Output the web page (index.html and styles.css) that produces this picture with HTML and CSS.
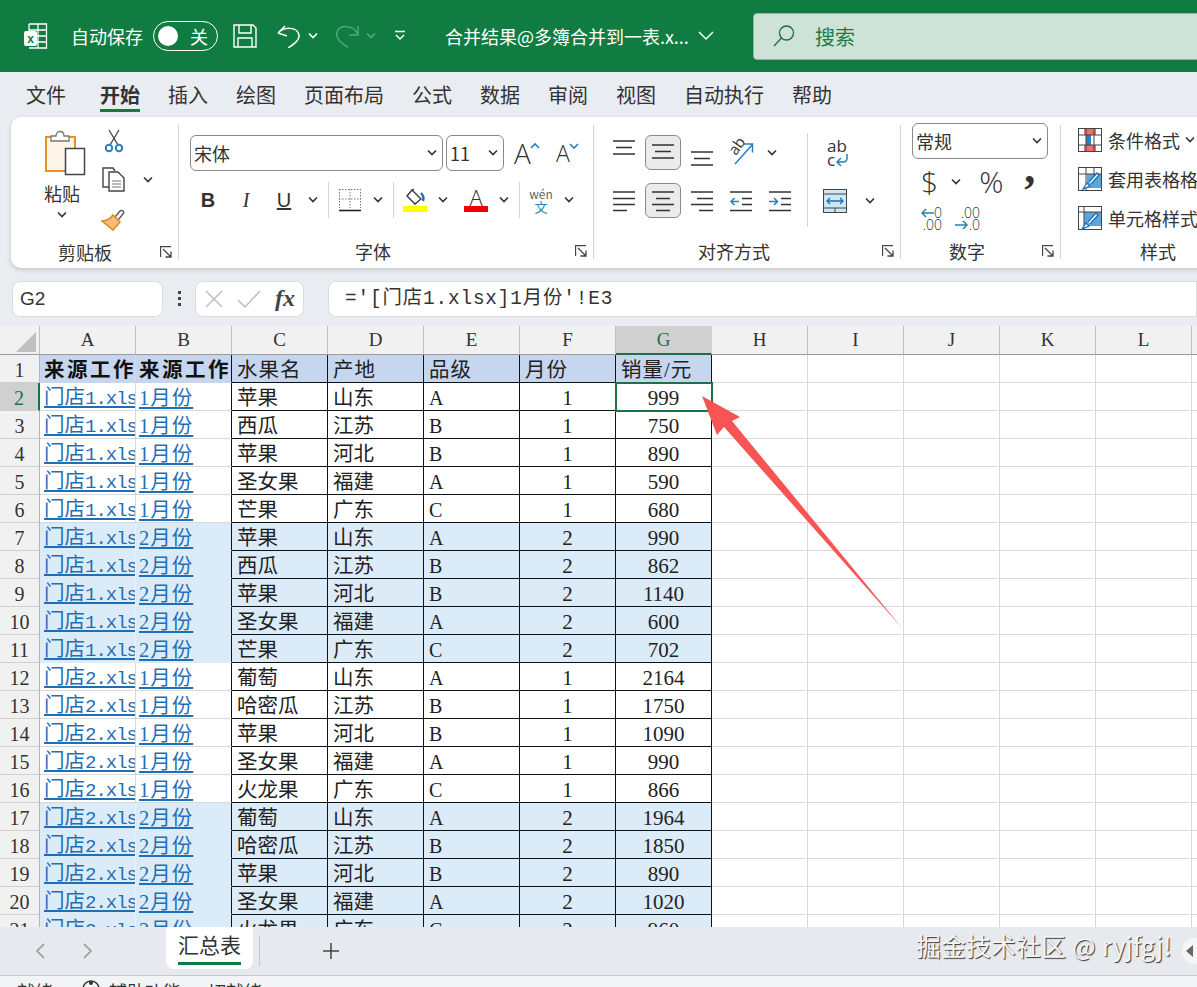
FILE: index.html
```html
<!DOCTYPE html>
<html lang="zh-CN">
<head>
    <meta charset="UTF-8">
    <meta name="viewport" content="width=device-width, initial-scale=1.0">
    <title>合并结果@多簿合并到一表.xlsx - Excel</title>
    <link rel="stylesheet" href="styles.css">
</head>
<body>
    <svg class="sprite" width="0" height="0">
        <symbol id="chev" viewBox="0 0 20 12"><path d="M6 3.500l4 4 4-4" fill="none" stroke="currentColor" stroke-width="1.600"/></symbol>
        <symbol id="launcher" viewBox="0 0 12 12"><path d="M.5 11V.5H11M3 3l8 8M11 5.500V11H5.500" fill="none" stroke="#444" stroke-width="1.300"/></symbol>
    </svg>

    <!-- 标题栏 -->
    <header class="titlebar">
        <svg class="ic-logo" width="24" height="26" viewBox="0 0 24 26">
            <path d="M5 1h17.500v24H5M5 1v7M14 1v24M5 7h17.500M5 13h17.500M5 19h17.500" fill="none" stroke="#fff" stroke-width="1.300"/>
            <rect x="0" y="8" width="13" height="15" rx="2" fill="#fff"/>
            <text x="6.500" y="20" class="logo-x">x</text>
        </svg>
        <span class="autosave">自动保存</span>
        <div class="toggle"><i class="knob"></i><span>关</span></div>
        <svg class="ic-save" width="24" height="24" viewBox="0 0 24 24"><path d="M1 1h19l3 3v19H1zM6 1v8h12V1M5 23v-9h14v9" fill="none" stroke="#fff" stroke-width="1.400"/></svg>
        <svg class="ic-undo" width="24" height="24" viewBox="0 0 24 24"><path d="M1 9l7-7M1 9l9 3M1 9c6-6 19-7 21 2 1 5-5 9-11 13" fill="none" stroke="#fff" stroke-width="1.500"/></svg>
        <svg class="ic-small" width="20" height="12"><use href="#chev"/></svg>
        <svg class="ic-redo" width="24" height="24" viewBox="0 0 24 24"><path d="M23 2v9h-9M23 10C18 1 5 0 2 8c-2 6 5 12 11 15" fill="none" stroke="#4fa97b" stroke-width="1.500"/></svg>
        <svg class="ic-small dim" width="20" height="12"><use href="#chev"/></svg>
        <svg class="ic-qat" width="12" height="12" viewBox="0 0 12 12"><path d="M1 1.500h10M2 5l4 4 4-4" fill="none" stroke="#fff" stroke-width="1.500"/></svg>
        <span class="doc-name">合并结果@多簿合并到一表.x...</span>
        <svg class="ic-title" width="16" height="10" viewBox="0 0 16 10"><path d="M1 1l7 7 7-7" fill="none" stroke="#fff" stroke-width="1.500"/></svg>
        <div class="search">
            <svg width="22" height="22" viewBox="0 0 22 22"><circle cx="13.500" cy="8" r="7" fill="none" stroke="#1c6b44" stroke-width="1.300"/><path d="M8.500 13L1 21" stroke="#1c6b44" stroke-width="1.300"/></svg>
            <span>搜索</span>
        </div>
    </header>

    <!-- 选项卡 -->
    <nav class="tabs">
        <span>文件</span><span class="active">开始</span><span>插入</span><span>绘图</span><span>页面布局</span><span>公式</span><span>数据</span><span>审阅</span><span>视图</span><span>自动执行</span><span>帮助</span>
    </nav>

    <!-- 功能区 -->
    <section class="ribbon">
        <div class="group group-clip">
            <div class="body clip-body">
                <div class="paste">
                    <svg class="paste-ic" width="42" height="46" viewBox="0 0 42 46">
                        <rect x="2" y="7" width="29" height="34" fill="#fdf5e8" stroke="#e8912a" stroke-width="2"/>
                        <path d="M7 11V6h5c0-6 8-6 8 0h5v5z" fill="#fff" stroke="#777" stroke-width="1.300"/>
                        <rect x="21.500" y="18.500" width="19" height="26" fill="#fff" stroke="#444" stroke-width="1.500"/>
                    </svg>
                    <span>粘贴</span>
                    <svg width="20" height="12"><use href="#chev"/></svg>
                </div>
                <div class="clip-tools">
                    <div class="clip-row">
                        <svg width="26" height="24" viewBox="0 0 26 24"><path d="M8 1l9 15M18 1L9 16" fill="none" stroke="#444" stroke-width="1.300"/><circle cx="8" cy="19" r="3.200" fill="none" stroke="#2a80b9" stroke-width="2"/><circle cx="18" cy="19" r="3.200" fill="none" stroke="#2a80b9" stroke-width="2"/></svg>
                    </div>
                    <div class="clip-row">
                        <svg width="26" height="25" viewBox="0 0 26 25"><path d="M8 20H2V1h10l2 3" fill="none" stroke="#444" stroke-width="1.400"/><path d="M8 5h9l6 6v13H8z" fill="#fff" stroke="#444" stroke-width="1.400"/><path d="M11 14h9M11 17h9M11 20h9" stroke="#777"/></svg>
                        <svg class="clip-chev" width="20" height="12"><use href="#chev"/></svg>
                    </div>
                    <div class="clip-row">
                        <svg width="26" height="24" viewBox="0 0 26 24"><path d="M14 10l5-6c2-2 5 1 3 3l-5 6" fill="#fff" stroke="#555" stroke-width="1.300"/><path d="M12 8l7 7-7 8-11-9c4 0 8-2 11-6z" fill="#f3c07a" stroke="#e08a22" stroke-width="1.600"/></svg>
                    </div>
                </div>
            </div>
            <div class="label label-clip"><span>剪贴板</span><svg class="launch" width="12" height="12"><use href="#launcher"/></svg></div>
        </div>
        <i class="divider"></i>

        <div class="group group-font">
            <div class="body">
                <div class="font-row">
                    <div class="field field-font"><span>宋体</span><svg width="20" height="12"><use href="#chev"/></svg></div>
                    <div class="field field-size"><span>11</span><svg width="20" height="12"><use href="#chev"/></svg></div>
                    <div class="grow"><span class="big-a">A</span><svg width="10" height="8" viewBox="0 0 10 8"><path d="M1 6l4-4 4 4" fill="none" stroke="#2a80b9" stroke-width="1.600"/></svg></div>
                    <div class="grow shrink"><span class="small-a">A</span><svg width="10" height="8" viewBox="0 0 10 8"><path d="M1 2l4 4 4-4" fill="none" stroke="#2a80b9" stroke-width="1.600"/></svg></div>
                </div>
                <div class="font-row second">
                    <span class="fmt fmt-b">B</span><span class="fmt fmt-i">I</span><span class="fmt fmt-u">U</span>
                    <svg class="fmt-chev" width="20" height="12"><use href="#chev"/></svg>
                    <i class="vsep"></i>
                    <div class="split">
                        <svg width="24" height="24" viewBox="0 0 24 24"><path d="M1.500 1v19M12 1v19M22.500 1v19M1 1.500h22M1 11h22" fill="none" stroke="#777" stroke-dasharray="1.500 1.500"/><path d="M1 22.500h22" stroke="#222" stroke-width="1.600"/></svg>
                        <svg width="20" height="12"><use href="#chev"/></svg>
                    </div>
                    <i class="vsep"></i>
                    <div class="split">
                        <div class="swatch swatch-yellow"><svg width="24" height="17" viewBox="0 0 24 17"><path d="M9 2l9 9-6 5-8-8zM9 2l2-1" fill="#fff" stroke="#333" stroke-width="1.300"/><path d="M18 5c2 2 3 5 2 8" fill="none" stroke="#1f6fb5" stroke-width="2.400"/></svg></div>
                        <svg width="20" height="12"><use href="#chev"/></svg>
                    </div>
                    <div class="split next">
                        <div class="swatch swatch-red"><span>A</span></div>
                        <svg width="20" height="12"><use href="#chev"/></svg>
                    </div>
                    <i class="vsep"></i>
                    <div class="split">
                        <div class="wen"><span>wén</span><b>文</b></div>
                        <svg width="20" height="12"><use href="#chev"/></svg>
                    </div>
                </div>
            </div>
            <div class="label label-font"><span>字体</span><svg class="launch" width="12" height="12"><use href="#launcher"/></svg></div>
        </div>
        <i class="divider"></i>

        <div class="group group-align">
            <div class="body align-body">
                <div class="align-grid">
                    <div class="align-row">
                        <div class="cell"><svg width="22" height="35" viewBox="0 0 22 35"><path d="M0 6h22M3 12.500h16M0 19h22" stroke="#333" stroke-width="1.300"/></svg></div>
                        <div class="cell on"><svg width="22" height="35" viewBox="0 0 22 35"><path d="M0 10h22M3 16.500h16M0 23h22" stroke="#333" stroke-width="1.300"/></svg></div>
                        <div class="cell"><svg width="22" height="35" viewBox="0 0 22 35"><path d="M0 17h22M3 23.500h16M0 30h22" stroke="#333" stroke-width="1.300"/></svg></div>
                        <div class="cell"><svg width="26" height="28" viewBox="0 0 26 28"><text class="ab" transform="translate(8 17) rotate(-55)">ab</text><path d="M7 25L24 6M16 5h8.500v8.500" fill="none" stroke="#2a80b9" stroke-width="1.500"/></svg></div>
                        <svg class="orient-chev" width="20" height="12"><use href="#chev"/></svg>
                    </div>
                    <div class="align-row">
                        <div class="cell"><svg width="22" height="24" viewBox="0 0 22 24"><path d="M0 3h22M0 9.500h22M0 15.500h22M0 21.500h14" stroke="#333" stroke-width="1.300"/></svg></div>
                        <div class="cell on"><svg width="22" height="24" viewBox="0 0 22 24"><path d="M0 3h22M4 9.500h14M0 15.500h22M4 21.500h14" stroke="#333" stroke-width="1.300"/></svg></div>
                        <div class="cell"><svg width="22" height="24" viewBox="0 0 22 24"><path d="M0 3h22M6 9.500h16M0 15.500h22M8 21.500h14" stroke="#333" stroke-width="1.300"/></svg></div>
                        <div class="cell"><svg width="22" height="24" viewBox="0 0 22 24"><path d="M0 3h22M12 9.500h10M12 15.500h10M0 21.500h22" stroke="#333" stroke-width="1.300"/><path d="M9 12.500H1M4.500 9l-3.500 3.500L4.500 16" fill="none" stroke="#2a80b9" stroke-width="1.500"/></svg></div>
                        <div class="cell"><svg width="22" height="24" viewBox="0 0 22 24"><path d="M0 3h22M12 9.500h10M12 15.500h10M0 21.500h22" stroke="#333" stroke-width="1.300"/><path d="M0 12.500h8.500M5 9l3.500 3.500L5 16" fill="none" stroke="#2a80b9" stroke-width="1.500"/></svg></div>
                    </div>
                </div>
                <i class="vsep tall"></i>
                <div class="wrap-col">
                    <div class="wrap"><span>ab<br>c</span><svg width="14" height="14" viewBox="0 0 14 14"><path d="M12 1v4c0 3-2 4-4 4H2M6 5L2 9l4 4" fill="none" stroke="#2a80b9" stroke-width="1.500"/></svg></div>
                    <div class="merge">
                        <svg width="24" height="24" viewBox="0 0 24 24"><rect x=".5" y=".5" width="23" height="23" fill="#cfe6f5" stroke="#444"/><path d="M1 5h22M1 19h22" stroke="#444"/><path d="M12 19v4" stroke="#444"/><path d="M4 12h16M7 9l-3 3 3 3M17 9l3 3-3 3" fill="none" stroke="#1f6fb5" stroke-width="1.300"/></svg>
                        <svg width="20" height="12"><use href="#chev"/></svg>
                    </div>
                </div>
            </div>
            <div class="label label-align"><span>对齐方式</span><svg class="launch" width="12" height="12"><use href="#launcher"/></svg></div>
        </div>
        <i class="divider"></i>

        <div class="group group-num">
            <div class="body">
                <div class="field field-num"><span>常规</span><svg width="20" height="12"><use href="#chev"/></svg></div>
                <div class="num-row">
                    <span class="sym sym-dollar">$</span>
                    <svg class="num-chev" width="20" height="12"><use href="#chev"/></svg>
                    <span class="sym sym-pct">%</span>
                    <span class="sym sym-comma">,</span>
                </div>
                <div class="dec-row">
                    <div class="dec"><span class="dec-top"><svg width="14" height="10" viewBox="0 0 14 10"><path d="M14 5H2M6 1L2 5l4 4" fill="none" stroke="#2a80b9" stroke-width="1.500"/></svg>0</span><span>.00</span></div>
                    <div class="dec"><span>.00</span><span class="dec-top"><svg width="14" height="10" viewBox="0 0 14 10"><path d="M0 5h12M8 1l4 4-4 4" fill="none" stroke="#2a80b9" stroke-width="1.500"/></svg>.0</span></div>
                </div>
            </div>
            <div class="label label-num"><span>数字</span><svg class="launch" width="12" height="12"><use href="#launcher"/></svg></div>
        </div>
        <i class="divider"></i>

        <div class="group group-style">
            <div class="body">
                <div class="style-row">
                    <svg width="24" height="24" viewBox="0 0 24 24"><rect x=".5" y=".5" width="23" height="23" fill="#fff" stroke="#444"/><path d="M6 1h12v6H6zM6 17h12v6H6z" fill="#f26b6b"/><path d="M8 7h5v10H8z" fill="#2a80b9"/><path d="M1 7h22M1 17h22M8 1v22M16 1v22" stroke="#444"/></svg>
                    <span>条件格式</span><svg width="20" height="12"><use href="#chev"/></svg>
                </div>
                <div class="style-row">
                    <svg width="24" height="24" viewBox="0 0 24 24"><rect x=".5" y=".5" width="23" height="23" fill="#fff" stroke="#444"/><path d="M9 7h14v14H9z" fill="#5ea5da"/><path d="M1 7h22M8 1v22M16 1v10" stroke="#444"/><path d="M5 22l4-6 3 3zM11 15l8-9 2 2-8 9" fill="#fff" stroke="#1f6fb5" stroke-width="1.300"/></svg>
                    <span>套用表格格式</span>
                </div>
                <div class="style-row">
                    <svg width="24" height="24" viewBox="0 0 24 24"><rect x=".5" y=".5" width="23" height="23" fill="#fff" stroke="#444"/><path d="M6 6h17v14H6z" fill="#5ea5da"/><path d="M1 6h22M6 1v22" stroke="#444"/><path d="M4 23l4-6 3 3zM10 16l8-9 2 2-8 9" fill="#fff" stroke="#1f6fb5" stroke-width="1.300"/></svg>
                    <span>单元格样式</span>
                </div>
            </div>
            <div class="label label-style"><span>样式</span></div>
        </div>
    </section>

    <!-- 编辑栏 -->
    <div class="formula-bar">
        <div class="name-box">G2<i></i></div>
        <div class="dots"><i></i><i></i><i></i></div>
        <div class="fx-box">
            <svg width="20" height="20" viewBox="0 0 20 20"><path d="M2 2l16 16M18 2L2 18" stroke="#bdbdbd" stroke-width="1.500"/></svg>
            <svg width="24" height="20" viewBox="0 0 24 20"><path d="M1 11l7 7L23 2" fill="none" stroke="#bdbdbd" stroke-width="1.500"/></svg>
            <span class="fx">fx</span>
        </div>
        <div class="formula">='[门店1.xlsx]1月份'!E3</div>
    </div>

    <!-- 工作表 -->
    <main class="sheet">
        <table class="grid">
            <colgroup>
                <col class="col-row"><col><col><col><col><col><col><col><col><col><col><col><col><col>
            </colgroup>
            <thead>
                <tr>
                    <th class="corner"><i></i></th><th>A</th><th>B</th><th>C</th><th>D</th><th>E</th><th>F</th><th class="sel-col">G</th><th>H</th><th>I</th><th>J</th><th>K</th><th>L</th><th>M</th>
                </tr>
            </thead>
            <tbody>
                <tr class="head"><th>1</th><td class="src"><b>来源工作表</b></td><td class="src end"><b>来源工作表</b></td><td class="d">水果名</td><td class="d">产地</td><td class="d">品级</td><td class="d">月份</td><td class="d">销量/元</td><td></td><td></td><td></td><td></td><td></td><td></td></tr>
                <tr><th class="sel-row">2</th><td class="src"><a>门店<span>1.xlsx</span></a></td><td class="src end"><a>1月份</a></td><td class="d">苹果</td><td class="d">山东</td><td class="d n-l">A</td><td class="d n">1</td><td class="d n current">999</td><td></td><td></td><td></td><td></td><td></td><td></td></tr>
                <tr><th>3</th><td class="src"><a>门店<span>1.xlsx</span></a></td><td class="src end"><a>1月份</a></td><td class="d">西瓜</td><td class="d">江苏</td><td class="d n-l">B</td><td class="d n">1</td><td class="d n">750</td><td></td><td></td><td></td><td></td><td></td><td></td></tr>
                <tr><th>4</th><td class="src"><a>门店<span>1.xlsx</span></a></td><td class="src end"><a>1月份</a></td><td class="d">苹果</td><td class="d">河北</td><td class="d n-l">B</td><td class="d n">1</td><td class="d n">890</td><td></td><td></td><td></td><td></td><td></td><td></td></tr>
                <tr><th>5</th><td class="src"><a>门店<span>1.xlsx</span></a></td><td class="src end"><a>1月份</a></td><td class="d">圣女果</td><td class="d">福建</td><td class="d n-l">A</td><td class="d n">1</td><td class="d n">590</td><td></td><td></td><td></td><td></td><td></td><td></td></tr>
                <tr><th>6</th><td class="src"><a>门店<span>1.xlsx</span></a></td><td class="src end"><a>1月份</a></td><td class="d">芒果</td><td class="d">广东</td><td class="d n-l">C</td><td class="d n">1</td><td class="d n">680</td><td></td><td></td><td></td><td></td><td></td><td></td></tr>
                <tr class="alt"><th>7</th><td class="src"><a>门店<span>1.xlsx</span></a></td><td class="src end"><a>2月份</a></td><td class="d">苹果</td><td class="d">山东</td><td class="d n-l">A</td><td class="d n">2</td><td class="d n">990</td><td></td><td></td><td></td><td></td><td></td><td></td></tr>
                <tr class="alt"><th>8</th><td class="src"><a>门店<span>1.xlsx</span></a></td><td class="src end"><a>2月份</a></td><td class="d">西瓜</td><td class="d">江苏</td><td class="d n-l">B</td><td class="d n">2</td><td class="d n">862</td><td></td><td></td><td></td><td></td><td></td><td></td></tr>
                <tr class="alt"><th>9</th><td class="src"><a>门店<span>1.xlsx</span></a></td><td class="src end"><a>2月份</a></td><td class="d">苹果</td><td class="d">河北</td><td class="d n-l">B</td><td class="d n">2</td><td class="d n">1140</td><td></td><td></td><td></td><td></td><td></td><td></td></tr>
                <tr class="alt"><th>10</th><td class="src"><a>门店<span>1.xlsx</span></a></td><td class="src end"><a>2月份</a></td><td class="d">圣女果</td><td class="d">福建</td><td class="d n-l">A</td><td class="d n">2</td><td class="d n">600</td><td></td><td></td><td></td><td></td><td></td><td></td></tr>
                <tr class="alt"><th>11</th><td class="src"><a>门店<span>1.xlsx</span></a></td><td class="src end"><a>2月份</a></td><td class="d">芒果</td><td class="d">广东</td><td class="d n-l">C</td><td class="d n">2</td><td class="d n">702</td><td></td><td></td><td></td><td></td><td></td><td></td></tr>
                <tr><th>12</th><td class="src"><a>门店<span>2.xlsx</span></a></td><td class="src end"><a>1月份</a></td><td class="d">葡萄</td><td class="d">山东</td><td class="d n-l">A</td><td class="d n">1</td><td class="d n">2164</td><td></td><td></td><td></td><td></td><td></td><td></td></tr>
                <tr><th>13</th><td class="src"><a>门店<span>2.xlsx</span></a></td><td class="src end"><a>1月份</a></td><td class="d">哈密瓜</td><td class="d">江苏</td><td class="d n-l">B</td><td class="d n">1</td><td class="d n">1750</td><td></td><td></td><td></td><td></td><td></td><td></td></tr>
                <tr><th>14</th><td class="src"><a>门店<span>2.xlsx</span></a></td><td class="src end"><a>1月份</a></td><td class="d">苹果</td><td class="d">河北</td><td class="d n-l">B</td><td class="d n">1</td><td class="d n">1090</td><td></td><td></td><td></td><td></td><td></td><td></td></tr>
                <tr><th>15</th><td class="src"><a>门店<span>2.xlsx</span></a></td><td class="src end"><a>1月份</a></td><td class="d">圣女果</td><td class="d">福建</td><td class="d n-l">A</td><td class="d n">1</td><td class="d n">990</td><td></td><td></td><td></td><td></td><td></td><td></td></tr>
                <tr><th>16</th><td class="src"><a>门店<span>2.xlsx</span></a></td><td class="src end"><a>1月份</a></td><td class="d">火龙果</td><td class="d">广东</td><td class="d n-l">C</td><td class="d n">1</td><td class="d n">866</td><td></td><td></td><td></td><td></td><td></td><td></td></tr>
                <tr class="alt"><th>17</th><td class="src"><a>门店<span>2.xlsx</span></a></td><td class="src end"><a>2月份</a></td><td class="d">葡萄</td><td class="d">山东</td><td class="d n-l">A</td><td class="d n">2</td><td class="d n">1964</td><td></td><td></td><td></td><td></td><td></td><td></td></tr>
                <tr class="alt"><th>18</th><td class="src"><a>门店<span>2.xlsx</span></a></td><td class="src end"><a>2月份</a></td><td class="d">哈密瓜</td><td class="d">江苏</td><td class="d n-l">B</td><td class="d n">2</td><td class="d n">1850</td><td></td><td></td><td></td><td></td><td></td><td></td></tr>
                <tr class="alt"><th>19</th><td class="src"><a>门店<span>2.xlsx</span></a></td><td class="src end"><a>2月份</a></td><td class="d">苹果</td><td class="d">河北</td><td class="d n-l">B</td><td class="d n">2</td><td class="d n">890</td><td></td><td></td><td></td><td></td><td></td><td></td></tr>
                <tr class="alt"><th>20</th><td class="src"><a>门店<span>2.xlsx</span></a></td><td class="src end"><a>2月份</a></td><td class="d">圣女果</td><td class="d">福建</td><td class="d n-l">A</td><td class="d n">2</td><td class="d n">1020</td><td></td><td></td><td></td><td></td><td></td><td></td></tr>
                <tr class="alt"><th>21</th><td class="src"><a>门店<span>2.xlsx</span></a></td><td class="src end"><a>2月份</a></td><td class="d">火龙果</td><td class="d">广东</td><td class="d n-l">C</td><td class="d n">2</td><td class="d n">960</td><td></td><td></td><td></td><td></td><td></td><td></td></tr>
            </tbody>
        </table>
        <!-- 红色箭头标注 -->
        <svg class="arrow" width="210" height="245" viewBox="0 0 210 245"><path d="M2 6L40 27 32 31 202 238 24 37 17 45z" fill="#f85454"/></svg>
    </main>

    <!-- 工作表标签 -->
    <div class="sheet-tabs">
        <svg class="nav-prev" width="12" height="18" viewBox="0 0 12 18"><path d="M10 2L3 9l7 7" fill="none" stroke="#a3a3a3" stroke-width="1.800"/></svg>
        <svg class="nav-next" width="12" height="18" viewBox="0 0 12 18"><path d="M2 2l7 7-7 7" fill="none" stroke="#a3a3a3" stroke-width="1.800"/></svg>
        <div class="sheet-tab"><span>汇总表</span></div>
        <i class="tab-sep"></i>
        <svg class="add-sheet" width="18" height="18" viewBox="0 0 18 18"><path d="M9 1v16M1 9h16" stroke="#444" stroke-width="1.500"/></svg>
        <span class="watermark">掘金技术社区 @ ryjfgj!</span>
        <div class="scroll-pill"><i></i></div>
    </div>

    <!-- 状态栏 -->
    <footer class="statusbar">
        <span>就绪</span>
        <svg class="status-ic" width="20" height="20" viewBox="0 0 20 20"><circle cx="10" cy="10" r="8" fill="none" stroke="#333" stroke-width="1.500"/><circle cx="10" cy="4" r="2" fill="#333"/></svg>
        <span>辅助功能: 一切就绪</span>
    </footer>
</body>
</html>
```

FILE: styles.css
```css
* {
    box-sizing: border-box;
}
body {
    margin: 0;
    width: 1197px;
    height: 987px;
    overflow: hidden;
    background-color: #e9ecf0;
    color: #333;
    font-family: "Noto Sans CJK SC", "Noto Sans", sans-serif;
}
i {
    font-style: normal;
}
svg {
    display: block;
    flex: none;
}
.sprite {
    position: absolute;
}

/* 标题栏 */
.titlebar {
    display: flex;
    align-items: center;
    height: 72px;
    padding-left: 24px;
    overflow: hidden;
    background-color: #107c41;
    color: #fff;
    font-size: 18px;
    white-space: nowrap;
}
.logo-x {
    font: bold 12px "Liberation Sans", sans-serif;
    fill: #107c41;
    text-anchor: middle;
}
.autosave {
    flex: none;
    margin-left: 23px;
}
.toggle {
    display: flex;
    flex: none;
    align-items: center;
    width: 65px;
    height: 30px;
    margin-left: 10px;
    padding-left: 4px;
    border: 1px solid #fff;
    border-radius: 15px;
}
.knob {
    width: 20px;
    height: 20px;
    border-radius: 50%;
    background-color: #fff;
}
.toggle span {
    margin-left: 12px;
}
.ic-save {
    margin-left: 15px;
}
.ic-undo {
    margin-left: 20px;
}
.ic-small {
    margin-left: 2px;
}
.ic-small.dim {
    color: #4fa97b;
}
.ic-redo {
    margin-left: 12px;
}
.ic-qat {
    margin-left: 13px;
}
.doc-name {
    flex: none;
    width: 244px;
    margin-left: 39px;
}
.ic-title {
    margin-left: 9px;
}
.search {
    display: flex;
    flex: none;
    align-items: center;
    width: 600px;
    height: 47px;
    margin-left: 39px;
    padding-left: 19px;
    border: 1px solid #8fb5a0;
    border-radius: 4px;
    background-color: #cde3d8;
    color: #1c7a4a;
    font-size: 20px;
}
.search span {
    margin-left: 20px;
}

/* 选项卡 */
.tabs {
    display: flex;
    gap: 28px;
    height: 45px;
    padding: 9px 0 0 26px;
    font-size: 20px;
    line-height: 28px;
}
.tabs span {
    height: 31px;
    white-space: nowrap;
}
.tabs span:first-child {
    margin-right: 6px;
}
.tabs .active {
    border-bottom: 3px solid #107c41;
    font-weight: 700;
}

/* 功能区 */
.ribbon {
    display: flex;
    width: 1260px;
    height: 151px;
    margin-left: 11px;
    border-radius: 10px;
    background-color: #fff;
    box-shadow: 0 2px 4px rgba(0, 0, 0, 0.16);
    font-size: 18px;
}
.group {
    display: flex;
    flex-direction: column;
    flex: none;
}
.group .body {
    flex: 1;
}
.divider {
    flex: none;
    width: 1px;
    margin: 8px 0 9px;
    background-color: #d4d4d4;
}
.label {
    display: flex;
    align-items: center;
    height: 28px;
    margin-bottom: 3px;
    color: #333;
    line-height: 28px;
    white-space: nowrap;
}
.launch {
    margin-left: auto;
    margin-right: 6px;
}
.group-clip {
    width: 167px;
}
.group-font {
    width: 414px;
}
.group-align {
    width: 306px;
}
.group-num {
    width: 159px;
}
.group-style {
    width: 300px;
}
.label-clip {
    padding-left: 47px;
}
.label-font {
    padding-left: 176px;
}
.label-align {
    padding-left: 104px;
}
.label-num {
    padding-left: 48px;
}
.label-style {
    padding-left: 79px;
}

/* 剪贴板 */
.clip-body {
    display: flex;
}
.paste {
    display: flex;
    flex-direction: column;
    align-items: center;
    width: 38px;
    margin-left: 32px;
    padding-top: 13px;
}
.paste-ic {
    margin-left: 5px;
}
.paste span {
    margin-top: 3px;
    line-height: 28px;
    white-space: nowrap;
}
.paste svg:last-child {
    margin-top: 2px;
}
.clip-tools {
    margin-left: 20px;
    padding-top: 4px;
}
.clip-row {
    display: flex;
    align-items: center;
    height: 39px;
}
.clip-chev {
    margin-left: 11px;
}

/* 字体 */
.group-font .body {
    padding: 18px 0 0 11px;
}
.font-row {
    display: flex;
    align-items: center;
    height: 36px;
}
.font-row.second {
    margin-top: 11px;
    margin-left: -1px;
}
.field {
    display: flex;
    align-items: center;
    justify-content: space-between;
    height: 36px;
    border: 1px solid #8a8a8a;
    border-radius: 6px;
    padding-left: 3px;
}
.field-font {
    width: 253px;
}
.field-size {
    width: 58px;
    margin-left: 3px;
}
.grow {
    display: flex;
    align-items: flex-start;
    margin-left: 10px;
    width: 34px;
}
.shrink {
    margin-left: 8px;
}
.big-a {
    font: 300 28px/36px "Open Sans", sans-serif;
}
.small-a {
    font: 300 23px/36px "Open Sans", sans-serif;
}
.grow svg {
    margin-top: 7px;
    margin-left: -1px;
}
.fmt {
    width: 38px;
    text-align: center;
    font: 20px "Liberation Sans", sans-serif;
}
.fmt-b {
    font-weight: 700;
}
.fmt-i {
    font-family: "Liberation Serif", serif;
    font-style: italic;
}
.fmt-u {
    text-decoration: underline;
}
.fmt-chev {
    margin-right: 5px;
}
.vsep {
    flex: none;
    width: 1px;
    height: 36px;
    background-color: #d4d4d4;
}
.vsep.tall {
    height: 94px;
    margin: 16px 0 0 9px;
}
.split {
    display: flex;
    align-items: center;
    padding: 0 5px 0 9px;
}
.split.next {
    padding-left: 6px;
}
.split > svg:last-child {
    margin-left: 6px;
}
.swatch {
    width: 24px;
    height: 24px;
    border-bottom: 6px solid #ffff00;
}
.swatch-red {
    border-bottom-color: #f00000;
}
.swatch span {
    display: block;
    text-align: center;
    font: 300 22px/18px "Open Sans", sans-serif;
}
.wen {
    display: flex;
    flex-direction: column;
    align-items: center;
    width: 24px;
    color: #666;
    font-size: 12px;
    line-height: 13px;
}
.wen b {
    color: #2a80b9;
    font-size: 13px;
    font-weight: 400;
}

/* 对齐方式 */
.align-body {
    display: flex;
}
.align-grid {
    padding: 18px 0 0 12px;
}
.align-row {
    display: flex;
    align-items: center;
    gap: 3px;
    height: 35px;
}
.align-row + .align-row {
    margin-top: 13px;
}
.cell {
    display: flex;
    align-items: center;
    justify-content: center;
    width: 36px;
    height: 35px;
}
.cell.on {
    border: 1px solid #8a8a8a;
    border-radius: 6px;
    background-color: #ebebeb;
}
.ab {
    font: 15px "Open Sans", sans-serif;
    fill: #333;
}
.wrap-col {
    margin-left: 15px;
    padding-top: 22px;
}
.wrap {
    position: relative;
    width: 30px;
    height: 38px;
    padding-left: 4px;
    font: 17px/14px "Open Sans", sans-serif;
}
.wrap svg {
    position: absolute;
    left: 12px;
    top: 14px;
}
.merge {
    display: flex;
    align-items: center;
    margin-top: 12px;
}
.merge svg:last-child {
    margin-left: 13px;
}

/* 数字 */
.group-num .body {
    padding: 6px 0 0 11px;
}
.field-num {
    width: 136px;
}
.num-row {
    display: flex;
    align-items: center;
    height: 39px;
    margin-top: 3px;
}
.sym {
    font-family: "Open Sans", sans-serif;
    font-weight: 300;
    font-size: 30px;
    line-height: 39px;
}
.sym-dollar {
    margin-left: 9px;
}
.num-chev {
    margin-left: 8px;
}
.sym-pct {
    margin-left: 13px;
}
.sym-comma {
    margin-top: -26px;
    margin-left: 21px;
    font-family: "Liberation Serif", serif;
    font-weight: 700;
    font-size: 44px;
    line-height: 20px;
}
.dec-row {
    display: flex;
    gap: 14px;
    margin-left: 6px;
    padding-top: 6px;
}
.dec {
    display: flex;
    flex-direction: column;
    align-items: flex-end;
    width: 24px;
    font: 300 14px/12px "Open Sans", sans-serif;
}
.dec-top {
    display: flex;
    align-items: center;
}

/* 样式 */
.group-style .body {
    padding: 3px 0 0 17px;
}
.style-row {
    display: flex;
    align-items: center;
    height: 39px;
    white-space: nowrap;
}
.style-row span {
    margin-left: 6px;
}

/* 编辑栏 */
.formula-bar {
    display: flex;
    align-items: center;
    height: 58px;
    padding-top: 3px;
}
.name-box {
    width: 151px;
    height: 36px;
    margin-left: 12px;
    padding-left: 7px;
    border: 1px solid #dcdcdc;
    border-radius: 8px;
    background-color: #fff;
    font: 19px/34px "Liberation Sans", sans-serif;
}
.dots {
    display: flex;
    flex-direction: column;
    gap: 3px;
    width: 32px;
    padding-left: 15px;
}
.dots i {
    width: 3px;
    height: 3px;
    background-color: #444;
}
.fx-box {
    display: flex;
    align-items: center;
    width: 109px;
    height: 36px;
    padding-left: 8px;
    border: 1px solid #dcdcdc;
    border-radius: 8px;
    background-color: #fff;
}
.fx-box svg + svg {
    margin-left: 13px;
}
.fx {
    margin-left: 14px;
    font: italic 700 24px "Liberation Serif", serif;
    color: #444;
}
.formula {
    flex: 1;
    height: 36px;
    margin-left: 24px;
    padding-left: 16px;
    border: 1px solid #dcdcdc;
    border-radius: 8px 0 0 8px;
    background-color: #fff;
    font-family: "Liberation Mono", "Noto Sans CJK SC", monospace;
    font-size: 19.400px;
    letter-spacing: 0.85px;
    line-height: 34px;
    white-space: nowrap;
}

/* 工作表 */
.sheet {
    position: relative;
    height: 601px;
    overflow: hidden;
    background-color: #fff;
}
.grid {
    table-layout: fixed;
    width: 1288px;
    border-collapse: separate;
    border-spacing: 0;
    font-family: "Liberation Serif", "Noto Sans CJK SC", serif;
}
.grid col {
    width: 96px;
}
.grid .col-row {
    width: 40px;
}
.grid thead th {
    height: 29px;
    padding: 0;
    border-right: 1px solid #bdbdbd;
    border-bottom: 1px solid #9b9b9b;
    background-color: #f1f1f1;
    font-size: 19px;
    font-weight: 400;
    line-height: 20px;
}
.grid thead .corner {
    position: relative;
}
.corner i {
    position: absolute;
    right: 3px;
    bottom: 2px;
    border-style: solid;
    border-width: 0 0 20px 20px;
    border-color: transparent transparent #bfbfbf transparent;
}
.grid thead .sel-col {
    border-right-color: #d0d0d0;
    border-bottom: 2px solid #1e7145;
    background-color: #d0d0d0;
    color: #1e7145;
}
.grid tbody tr {
    height: 28px;
}
.grid tbody th {
    padding: 3px 0 0;
    border-right: 1px solid #b5b5b5;
    border-bottom: 1px solid #cfcfcf;
    background-color: #f1f1f1;
    font-size: 20px;
    font-weight: 400;
    line-height: 20px;
}
.grid tbody .sel-row {
    border-right: 2px solid #1e7145;
    background-color: #d0d0d0;
    color: #1e7145;
}
.grid td {
    padding: 3px 5px 0;
    overflow: hidden;
    border-right: 1px solid #d9d9d9;
    border-bottom: 1px solid #d9d9d9;
    font-size: 20.500px;
    line-height: 20px;
    white-space: nowrap;
}
.grid .src {
    padding: 3px 0 0 4px;
}
.grid .src.end {
    padding-left: 3px;
    border-right: 1px solid #111;
}
.src a {
    color: #1f6fb5;
    text-decoration: underline;
}
.src.end a {
    letter-spacing: 1px;
}
.src a span {
    font-family: "Liberation Mono", monospace;
    font-size: 19px;
    letter-spacing: -1px;
}
.src b {
    color: #111;
    letter-spacing: 2.500px;
}
.grid .d {
    border-right: 1px solid #111;
    border-bottom: 1px solid #111;
    color: #222;
}
.grid .n {
    text-align: center;
    font-size: 21px;
}
.grid .n-l {
    font-size: 20px;
}
.grid .head td.d {
    letter-spacing: 1px;
}
.grid .head td.src,
.grid .head td.d {
    background-color: #c5d6ee;
}
.grid .head td.src {
    border-bottom-color: #c5d6ee;
}
.grid .alt td.src,
.grid .alt td.d {
    background-color: #dcebf8;
}
.grid .alt td.src {
    border-bottom-color: #dcebf8;
}
.grid .alt td.src:first-of-type {
    border-right-color: #e8f1f9;
}
.grid .current {
    outline: 2px solid #1e7145;
    outline-offset: -1px;
}
.arrow {
    position: absolute;
    left: 700px;
    top: 64px;
}

/* 工作表标签 */
.sheet-tabs {
    display: flex;
    align-items: center;
    height: 48px;
    background-color: #e6e9ed;
}
.nav-prev {
    margin-left: 34px;
}
.nav-next {
    margin-left: 36px;
}
.sheet-tab {
    align-self: flex-start;
    width: 87px;
    height: 42px;
    margin-left: 72px;
    padding: 0 12px;
    border-radius: 0 0 8px 8px;
    background-color: #fff;
    font-size: 21px;
    line-height: 35px;
    white-space: nowrap;
}
.sheet-tab span {
    display: block;
    height: 38px;
    border-bottom: 3px solid #107c41;
}
.tab-sep {
    width: 1px;
    height: 30px;
    margin-left: 6px;
    background-color: #c8c8c8;
}
.add-sheet {
    margin-left: 62px;
}
.watermark {
    margin-left: auto;
    margin-bottom: 12px;
    color: #f5f5f5;
    font-size: 24.500px;
    letter-spacing: 0.5px;
    text-shadow: 1px 1px 1px #333;
    white-space: nowrap;
}
.scroll-pill {
    display: flex;
    align-items: center;
    width: 15px;
    height: 26px;
    margin-left: 10px;
    padding-left: 4px;
    border-radius: 13px 0 0 13px;
    background-color: #f5f5f5;
}
.scroll-pill i {
    border-style: solid;
    border-width: 6px 7px 6px 0;
    border-color: transparent #666 transparent transparent;
}

/* 状态栏 */
.statusbar {
    display: flex;
    height: 12px;
    padding: 3px 0 0 17px;
    overflow: hidden;
    border-top: 1px solid #c8c8c8;
    background-color: #f3f4f5;
    font-size: 18px;
    line-height: 24px;
}
.status-ic {
    margin: 0 8px 0 28px;
}
```
